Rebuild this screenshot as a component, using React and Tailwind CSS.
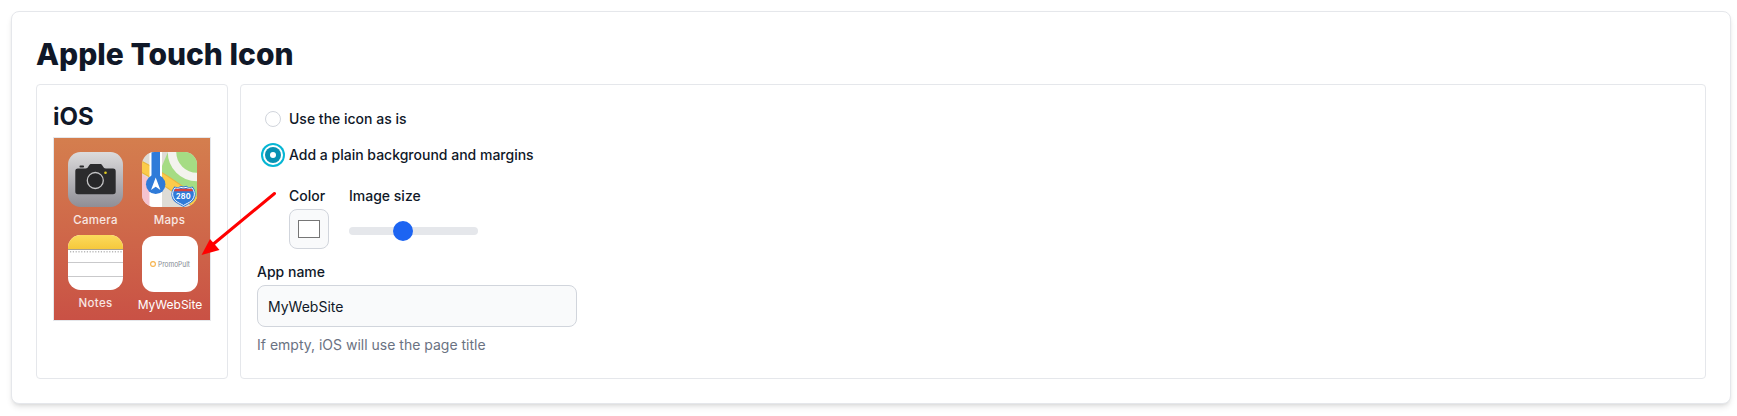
function CameraIcon() {
  return (
    <svg viewBox="0 0 55 55" className="block h-[55px] w-[55px]">
      <defs>
        <linearGradient id="camera-bg" x1="0" y1="0" x2="0" y2="1">
          <stop offset="0" stopColor="#dcdbdc" />
          <stop offset="1" stopColor="#8f8e96" />
        </linearGradient>
      </defs>
      <rect width="55" height="55" rx="12.5" fill="url(#camera-bg)" />
      <rect x="11.5" y="13.5" width="4.5" height="2" rx="0.8" fill="#2b2b2d" />
      <path
        d="M10 16.5h7.5c1.6 0 2.2-.6 2.9-1.9l.8-1.4c.6-1 1-1.3 2.2-1.3h8.6c1.2 0 1.7.3 2.2 1.3l.8 1.4c.7 1.3 1.3 1.9 2.9 1.9H45c1.9 0 2.7.9 2.7 2.7v20.3c0 1.8-.8 2.7-2.7 2.7H10c-1.9 0-2.7-.9-2.7-2.7V19.2c0-1.8.8-2.7 2.7-2.7z"
        fill="#2b2b2d"
      />
      <circle cx="27.3" cy="28.5" r="8" fill="#262628" stroke="#c4c4c6" strokeWidth="1.3" />
      <circle cx="37.5" cy="20.7" r="1.3" fill="#e3cf22" />
    </svg>
  );
}

function MapsIcon() {
  return (
    <svg viewBox="0 0 55 55" className="block h-[55px] w-[55px]">
      <defs>
        <clipPath id="maps-clip">
          <rect width="55" height="55" rx="12.5" />
        </clipPath>
      </defs>
      <g clipPath="url(#maps-clip)">
        <rect width="55" height="55" fill="#dedcd6" />
        <path d="M26 0h29v52L20 23V14z" fill="#a5dc84" />
        <circle cx="55" cy="0" r="25" fill="none" stroke="#f3f3ee" strokeWidth="8.5" />
        <path d="M0 22l10 7v26H0z" fill="#f5c3cf" />
        <path d="M-2 14Q26 28 58 54" fill="none" stroke="#e9b63d" strokeWidth="11" />
        <path d="M-2 14Q26 28 58 54" fill="none" stroke="#fbcb4b" strokeWidth="9" />
        <path d="M7.5 0H20v55H7.5z" fill="#fff" />
        <path d="M9.5 0H18v34H9.5z" fill="#2f7bd9" />
        <circle cx="13.7" cy="32.3" r="9.7" fill="#2f7bd9" />
        <path d="M13.7 25.5L18.4 38l-4.7-3.3L9 38z" fill="#fff" />
        <path
          d="M33 36c2 .8 4.3.3 5.8-.7 1.6.7 3.8.7 5.4 0 1.5 1 3.8 1.5 5.8.7 3 3.2 3.5 9-.7 12.8-2.3 2.2-5.2 3-7.8 4.7-2.6-1.7-5.5-2.5-7.8-4.7-4.2-3.8-3.7-9.600-.7-12.800z"
          fill="#2f7bd9"
          stroke="#2f7bd9"
          strokeWidth="2.6"
        />
        <path
          d="M33 36c2 .8 4.3.3 5.8-.7 1.6.7 3.8.7 5.4 0 1.5 1 3.8 1.5 5.8.7 3 3.2 3.5 9-.7 12.8-2.3 2.2-5.2 3-7.8 4.7-2.6-1.7-5.5-2.5-7.8-4.7-4.2-3.8-3.7-9.600-.7-12.800z"
          fill="#2f7bd9"
          stroke="#fff"
          strokeWidth="1"
        />
        <path d="M33.2 36.7h16.6l1.3 2.6H31.900z" fill="#d8413c" />
        <text x="41.5" y="47" textAnchor="middle" fill="#fff" fontSize="7.2" fontWeight="700" fontFamily="Inter, sans-serif">
          280
        </text>
      </g>
    </svg>
  );
}

function NotesIcon() {
  return (
    <svg viewBox="0 0 55 55" className="block h-[55px] w-[55px]">
      <defs>
        <clipPath id="notes-clip">
          <rect width="55" height="55" rx="12.5" />
        </clipPath>
        <linearGradient id="notes-top" x1="0" y1="0" x2="0" y2="1">
          <stop offset="0" stopColor="#fbdb5c" />
          <stop offset="1" stopColor="#f6c83c" />
        </linearGradient>
      </defs>
      <g clipPath="url(#notes-clip)">
        <rect width="55" height="55" fill="#fff" />
        <rect width="55" height="14" fill="url(#notes-top)" />
        <path d="M0 14.5h55" stroke="#a89f8c" strokeWidth="1" />
        <path d="M2 16.8h52" stroke="#b9b9b9" strokeWidth="1.6" strokeDasharray="1.2 1.6" />
        <path d="M0 27.5h55M0 41.5h55" stroke="#c9c9cb" strokeWidth="1" />
      </g>
    </svg>
  );
}

function SiteIcon() {
  return (
    <div className="mt-px flex h-14 w-14 items-center justify-center rounded-xl bg-white">
      <svg viewBox="0 0 48 16" className="h-4 w-12">
        <circle cx="7" cy="8" r="2.4" fill="none" stroke="#f6b24a" strokeWidth="1.1" />
        <text
          x="12"
          y="10.6"
          textLength="32"
          lengthAdjust="spacingAndGlyphs"
          fill="#858b93"
          fontSize="7.4"
          fontFamily="Inter, sans-serif"
        >
          PromoPult
        </text>
      </svg>
    </div>
  );
}

function HomeScreenApp({ icon, label, className }) {
  return (
    <div className={`flex flex-col ${className}`}>
      {icon}
      <span className="self-center whitespace-nowrap">{label}</span>
    </div>
  );
}

function HomeScreen() {
  return (
    <div className="mt-1 h-[184px] border border-gray-200 bg-linear-to-b from-[#d47e4e] to-[#c95145]">
      <div className="grid grid-cols-[74px_56px] grid-rows-[83px_83px] pt-[14px] pl-[14px] text-white">
        <HomeScreenApp
          icon={<CameraIcon />}
          label="Camera"
          className="w-[55px] text-[11.5px] leading-[26px] font-medium tracking-[0.3px] text-white/85"
        />
        <HomeScreenApp
          icon={<MapsIcon />}
          label="Maps"
          className="w-[55px] text-[11.5px] leading-[26px] font-medium tracking-[0.3px] text-white/85"
        />
        <HomeScreenApp
          icon={<NotesIcon />}
          label="Notes"
          className="w-[55px] text-[11.5px] leading-[26px] font-medium tracking-[0.3px] text-white/85"
        />
        <HomeScreenApp icon={<SiteIcon />} label="MyWebSite" className="w-14 text-xs leading-[26px]" />
      </div>
    </div>
  );
}

function RadioRow({ label, checked }) {
  return (
    <label className="flex items-center gap-2 p-2 text-sm font-medium">
      {checked ? (
        <span className="flex h-4 w-4 items-center justify-center rounded-full bg-[#0891b2] ring-2 ring-[#06b6d4] ring-offset-2">
          <span className="h-[6px] w-[6px] rounded-full bg-white" />
        </span>
      ) : (
        <span className="h-4 w-4 rounded-full border border-gray-300 bg-white" />
      )}
      {label}
    </label>
  );
}

function Arrow() {
  return (
    <svg viewBox="0 0 80 70" className="pointer-events-none absolute top-[189px] left-[200px] h-[70px] w-20">
      <path d="M74.5 4.5L14 54.5" stroke="#ff0000" strokeWidth="3" strokeLinecap="round" />
      <path d="M1.5 66L10 50l4 4.5 5.500 6.500z" fill="#ff0000" />
    </svg>
  );
}

export default function App() {
  return (
    <div className="relative h-[416px] bg-white pt-[11px] pr-[6px] pl-[11px] font-['Inter',sans-serif] text-gray-900">
      <section className="flex h-[393px] flex-col gap-3 rounded-lg border border-gray-200 bg-white p-6 shadow-md">
        <h2 className="text-3xl font-extrabold">Apple Touch Icon</h2>
        <div className="flex flex-1 gap-3">
          <div className="w-48 shrink-0 rounded border border-gray-200 p-4">
            <h3 className="text-2xl font-bold">iOS</h3>
            <HomeScreen />
          </div>
          <div className="flex-1 rounded border border-gray-200 p-4">
            <RadioRow label="Use the icon as is" />
            <RadioRow label="Add a plain background and margins" checked />
            <div className="mt-[13px] flex gap-5 pl-8">
              <div className="w-10">
                <div className="text-sm font-medium">Color</div>
                <div className="mt-[3px] flex h-10 w-10 items-center justify-center rounded-lg border border-gray-300 bg-gray-50">
                  <span className="h-[18px] w-[22px] border border-[#767676] bg-white" />
                </div>
              </div>
              <div className="w-[129px]">
                <div className="text-sm font-medium">Image size</div>
                <div className="mt-[21px] h-2 rounded-lg bg-gray-200">
                  <span className="relative -top-[6px] ml-11 block h-5 w-5 rounded-full bg-[#1c64f2]" />
                </div>
              </div>
            </div>
            <label className="mt-[13px] block text-sm font-medium">App name</label>
            <input
              type="text"
              defaultValue="MyWebSite"
              className="mt-[3px] block h-[42px] w-80 rounded-lg border border-gray-300 bg-gray-50 px-2.5 text-sm outline-none"
            />
            <p className="mt-2 text-sm text-gray-500">If empty, iOS will use the page title</p>
          </div>
        </div>
      </section>
      <Arrow />
    </div>
  );
}
